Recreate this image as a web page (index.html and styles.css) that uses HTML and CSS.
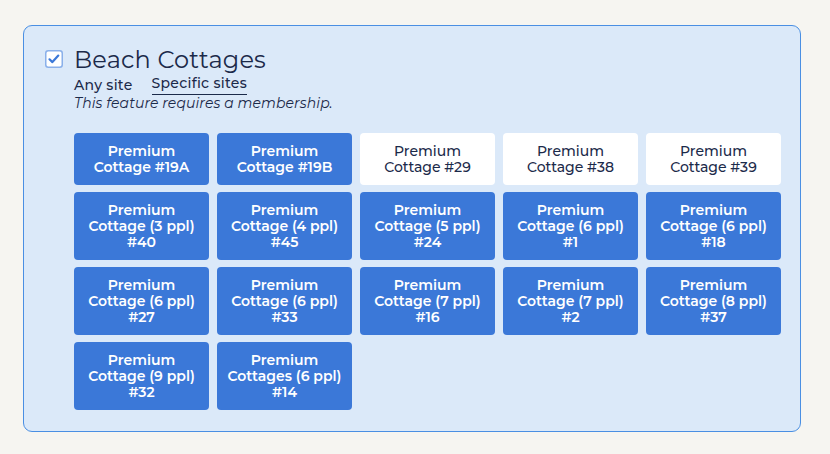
FILE: index.html
```html
<!DOCTYPE html>
<html>
<head>
  <title>Beach Cottages</title>
  <link rel="stylesheet" href="styles.css">
</head>
<body>
  <div class="card">
    <div class="check">
      <svg width="18" height="18" viewBox="0 0 18 18">
        <rect x="0.75" y="0.75" width="16.5" height="16.5" rx="2.5" fill="#fff" stroke="#8ab0ea" stroke-width="1.5"/>
        <path d="M4.5 9.3 L7.4 12.1 L13.3 5.6" fill="none" stroke="#3b78d8" stroke-width="2.2" stroke-linecap="round" stroke-linejoin="round"/>
      </svg>
    </div>
    <div class="content">
      <h2>Beach Cottages</h2>
      <div class="tabs">
        <span class="tab">Any site</span>
        <span class="tab active">Specific sites</span>
      </div>
      <p class="note">This feature requires a membership.</p>

      <div class="sites">
        <div class="site on">Premium<br>Cottage #19A</div>
        <div class="site on">Premium<br>Cottage #19B</div>
        <div class="site">Premium<br>Cottage #29</div>
        <div class="site">Premium<br>Cottage #38</div>
        <div class="site">Premium<br>Cottage #39</div>
        <div class="site on">Premium<br>Cottage (3 ppl)<br>#40</div>
        <div class="site on">Premium<br>Cottage (4 ppl)<br>#45</div>
        <div class="site on">Premium<br>Cottage (5 ppl)<br>#24</div>
        <div class="site on">Premium<br>Cottage (6 ppl)<br>#1</div>
        <div class="site on">Premium<br>Cottage (6 ppl)<br>#18</div>
        <div class="site on">Premium<br>Cottage (6 ppl)<br>#27</div>
        <div class="site on">Premium<br>Cottage (6 ppl)<br>#33</div>
        <div class="site on">Premium<br>Cottage (7 ppl)<br>#16</div>
        <div class="site on">Premium<br>Cottage (7 ppl)<br>#2</div>
        <div class="site on">Premium<br>Cottage (8 ppl)<br>#37</div>
        <div class="site on">Premium<br>Cottage (9 ppl)<br>#32</div>
        <div class="site on">Premium<br>Cottages (6 ppl)<br>#14</div>
      </div>
    </div>
  </div>
</body>
</html>
```

FILE: styles.css
```css
/* site picker card */
body {
  margin: 0;
  padding: 25px 29px 0 23px;
  background-color: #f6f5f1;
  font-family: "Montserrat", Inter, "Noto Sans", sans-serif;
  color: #1b2a4a;
}

.card {
  display: flex;
  background-color: #dbe9f9;
  border: 1px solid #4a8fe3;
  border-radius: 9px;
  padding: 23px 20px 20px 21px;
  height: 362px;
}

.check {
  width: 18px;
  height: 18px;
  margin-top: 1px;
  margin-right: 11px;
}

.check svg {
  display: block;
}

.content {
  flex: 1;
}

h2 {
  margin: 0;
  font-size: 24px;
  font-weight: 400;
  line-height: 22px;
  letter-spacing: 0.2px;
}

.tabs {
  display: flex;
  gap: 19px;
  margin-top: 4px;
  font-size: 14px;
  font-weight: 500;
  line-height: 20px;
  letter-spacing: 0.3px;
}

.tab.active {
  border-bottom: 1.5px solid #1b2a4a;
  line-height: 17px;
}

.note {
  margin: 0;
  font-size: 14px;
  font-style: italic;
  line-height: 17px;
  letter-spacing: 0.1px;
}

.sites {
  display: grid;
  grid-template-columns: repeat(5, 135px);
  column-gap: 8px;
  row-gap: 7px;
  margin-top: 21px;
}

.site {
  background-color: #fff;
  border-radius: 4px;
  padding: 10px 4px;
  font-size: 14px;
  line-height: 16px;
  text-align: center;
  color: #1b2a4a;
  font-weight: 500;
}

.site.on {
  background-color: #3b78d8;
  color: #fff;
  font-weight: 600;
}
```
